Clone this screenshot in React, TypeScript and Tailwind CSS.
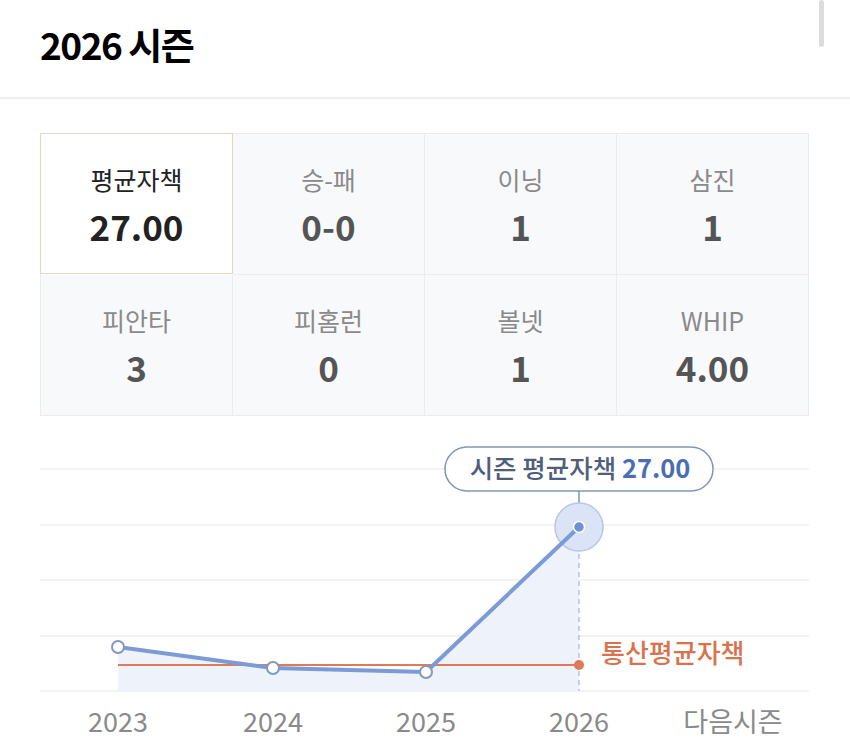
import React from "react";

const FONT = '"Noto Sans CJK KR", "Noto Sans", sans-serif';

const stats = [
  { label: "평균자책", value: "27.00", active: true },
  { label: "승-패", value: "0-0" },
  { label: "이닝", value: "1" },
  { label: "삼진", value: "1" },
  { label: "피안타", value: "3" },
  { label: "피홈런", value: "0" },
  { label: "볼넷", value: "1" },
  { label: "WHIP", value: "4.00" },
];

function Chart() {
  const grid = [469, 525, 580, 636, 691];
  const pts: [number, number][] = [
    [118, 647],
    [273, 668],
    [426, 672],
    [579, 527],
  ];
  const labels: [number, string][] = [
    [118, "2023"],
    [273, "2024"],
    [426, "2025"],
    [579, "2026"],
    [733, "다음시즌"],
  ];
  return (
    <svg width="850" height="334" viewBox="0 416 850 334" className="block" style={{ fontFamily: FONT }}>
      {grid.map((y) => (
        <line key={y} x1="40" x2="809" y1={y} y2={y} stroke="#efefef" strokeWidth="1.5" />
      ))}
      <polygon points="118,647 273,668 426,672 579,527 579,691 118,691" fill="#eef2fb" />
      <line x1="579" x2="579" y1="491" y2="506" stroke="#7f95b5" strokeWidth="1.5" />
      <line x1="579" x2="579" y1="527" y2="691" stroke="#b6c3dc" strokeWidth="1.5" strokeDasharray="5 4" />
      <line x1="118" x2="579" y1="665" y2="665" stroke="#df7a55" strokeWidth="2" />
      <circle cx="579" cy="665" r="5" fill="#df7a55" />
      <circle cx="579" cy="527" r="24" fill="#dbe4f6" stroke="#b7c7e6" strokeWidth="1.5" />
      <polyline
        points={pts.map((p) => p.join(",")).join(" ")}
        fill="none"
        stroke="#7b9ad6"
        strokeWidth="4"
        strokeLinejoin="round"
        strokeLinecap="round"
      />
      {pts.slice(0, 3).map(([x, y]) => (
        <circle key={x} cx={x} cy={y} r="6" fill="#ffffff" stroke="#8398bb" strokeWidth="2" />
      ))}
      <circle cx="579" cy="527" r="5.5" fill="#6f8fd6" stroke="#ffffff" strokeWidth="1.5" />
      <rect x="445" y="447" width="268" height="44" rx="22" fill="#ffffff" stroke="#8096b6" strokeWidth="1.5" />
      <text x="580" y="478" textAnchor="middle" fontSize="25.5">
        <tspan fill="#4f5e7a" fontWeight="500">시즌 평균자책 </tspan>
        <tspan fill="#4b6eb2" fontWeight="700">27.00</tspan>
      </text>
      <text x="601" y="663" fontSize="26" fill="#d8734e" fontWeight="500">
        통산평균자책
      </text>
      {labels.map(([x, t]) => (
        <text key={t} x={x} y="732" textAnchor="middle" fontSize="27" fill="#8a8a8a">
          {t}
        </text>
      ))}
    </svg>
  );
}

export default function App() {
  return (
    <div className="relative w-[850px] h-[750px] overflow-hidden bg-white" style={{ fontFamily: FONT }}>
      <div className="absolute left-[819px] top-0 h-[47px] w-[5px] rounded-full bg-[#dcdcdc]" />
      <div className="h-[99px] border-b-2 border-[#f0f0f0] px-10 pt-[20px]">
        <h1 className="text-[37px] font-bold leading-[48px] tracking-[-1.5px] text-black">2026 시즌</h1>
      </div>
      <div className="mx-10 mt-[34px] grid w-[769px] grid-cols-4 border-l border-t border-[#ececec]">
        {stats.map((s, i) => (
          <div
            key={i}
            className={
              s.active
                ? "flex h-[141px] flex-col items-center justify-center border border-[#e3d6c6] bg-white -ml-px -mt-px"
                : "flex h-[141px] flex-col items-center justify-center border-b border-r border-[#ececec] bg-[#f8f9fb]"
            }
          >
            <div className={s.active ? "text-[25px] leading-[32px] text-[#222]" : "text-[25px] leading-[32px] text-[#8a8a8a]"}>
              {s.label}
            </div>
            <div
              className={
                s.active
                  ? "mt-[12px] text-[35px] font-bold leading-[38px] text-[#222]"
                  : "mt-[12px] text-[35px] font-bold leading-[38px] text-[#555]"
              }
            >
              {s.value}
            </div>
          </div>
        ))}
      </div>
      <Chart />
    </div>
  );
}
